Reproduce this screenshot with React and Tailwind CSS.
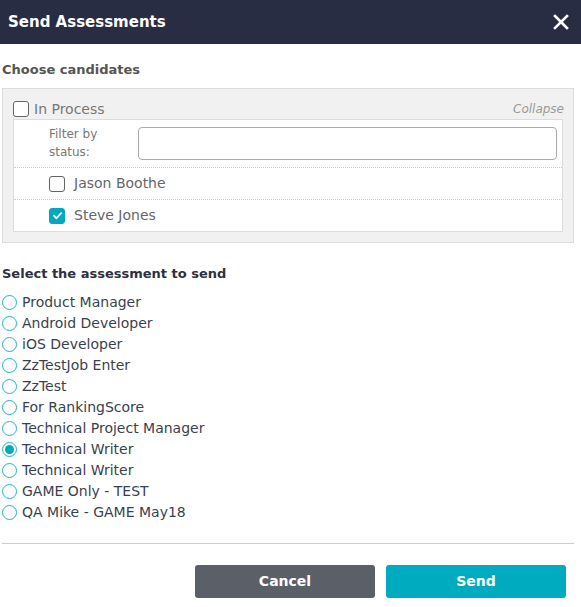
import { useState } from "react";

const assessments = [
  "Product Manager",
  "Android Developer",
  "iOS Developer",
  "ZzTestJob Enter",
  "ZzTest",
  "For RankingScore",
  "Technical Project Manager",
  "Technical Writer",
  "Technical Writer",
  "GAME Only - TEST",
  "QA Mike - GAME May18",
];

function Checkbox({ checked, onChange }) {
  return (
    <button
      type="button"
      onClick={onChange}
      className={`w-[16px] h-[16px] rounded-[3px] flex items-center justify-center shrink-0 ${
        checked ? "bg-[#00a9bf] border border-[#00a9bf]" : "bg-white border border-[#666]"
      }`}
    >
      {checked && (
        <svg width="11" height="11" viewBox="0 0 12 12">
          <path d="M2 6.2 L4.8 9 L10 3.4" fill="none" stroke="white" strokeWidth="2" strokeLinecap="round" strokeLinejoin="round" />
        </svg>
      )}
    </button>
  );
}

export default function App() {
  const [inProcess, setInProcess] = useState(false);
  const [picked, setPicked] = useState({ jason: false, steve: true });
  const [selected, setSelected] = useState(7);

  return (
    <div className="w-[581px] h-[607px] bg-white font-['DejaVu_Sans',sans-serif] text-[14px]">
      <div className="h-[44px] bg-[#292d44] flex items-center justify-between pl-[8px] pr-[12px]">
        <h1 className="text-white text-[15px] font-bold">Send Assessments</h1>
        <svg width="16" height="16" viewBox="0 0 16 16">
          <path d="M2 2 L14 14 M14 2 L2 14" stroke="white" strokeWidth="2.6" strokeLinecap="square" />
        </svg>
      </div>

      <div className="px-[2px] pr-[7px]">
        <div className="pt-[16px] pb-[8px] text-[#555] font-bold text-[13px] leading-[20px]">
          Choose candidates
        </div>

        <div className="bg-[#f1f1f1] border border-[#dcdcdc] pl-[10px] pr-[10px] pt-[11px] pb-[10px]">
          <div className="flex items-center justify-between h-[18px]">
            <label className="flex items-center gap-[5px] text-[#777]">
              <Checkbox checked={inProcess} onChange={() => setInProcess(!inProcess)} />
              <span>In Process</span>
            </label>
            <span className="italic text-[#999] text-[12px] -mr-[1px]">Collapse</span>
          </div>

          <div className="bg-white border border-[#dcdcdc] mt-[1px]">
            <div className="flex items-center pl-[35px] pr-[5px] pt-[5px] pb-[6px] border-b border-dotted border-[#ccc]">
              <div className="w-[89px] text-[12px] leading-[18px] text-[#777]">
                Filter by
                <br />
                status:
              </div>
              <input className="flex-1 h-[33px] border border-[#aaa] rounded-[4px] outline-none px-2" />
            </div>
            <label className="flex items-center gap-[9px] pl-[35px] h-[32px] border-b border-dotted border-[#ccc] text-[#666]">
              <Checkbox checked={picked.jason} onChange={() => setPicked({ ...picked, jason: !picked.jason })} />
              <span>Jason Boothe</span>
            </label>
            <label className="flex items-center gap-[9px] pl-[35px] h-[31px] text-[#666]">
              <Checkbox checked={picked.steve} onChange={() => setPicked({ ...picked, steve: !picked.steve })} />
              <span>Steve Jones</span>
            </label>
          </div>
        </div>

        <div className="pt-[21px] pb-[8px] text-[#2d3040] font-bold text-[13px] leading-[20px]">
          Select the assessment to send
        </div>

        <div className="flex flex-col">
          {assessments.map((name, i) => (
            <label key={i} className="flex items-center gap-[5px] h-[21px] text-[#3a3f4f] cursor-pointer" onClick={() => setSelected(i)}>
              <span className="w-[15px] h-[15px] rounded-full border border-[#1fb5c6] bg-white flex items-center justify-center shrink-0">
                {selected === i && <span className="w-[9px] h-[9px] rounded-full bg-[#00a9bf]" />}
              </span>
              <span>{name}</span>
            </label>
          ))}
        </div>

        <div className="mt-[20px] border-t border-[#ccc]" />

        <div className="flex justify-end gap-[11px] pt-[21px] pr-[8px]">
          <button className="w-[180px] h-[33px] rounded-[3px] bg-[#5b6068] text-white font-bold text-[14px]">
            Cancel
          </button>
          <button className="w-[180px] h-[33px] rounded-[3px] bg-[#00abbf] text-white font-bold text-[14px]">
            Send
          </button>
        </div>
      </div>
    </div>
  );
}
